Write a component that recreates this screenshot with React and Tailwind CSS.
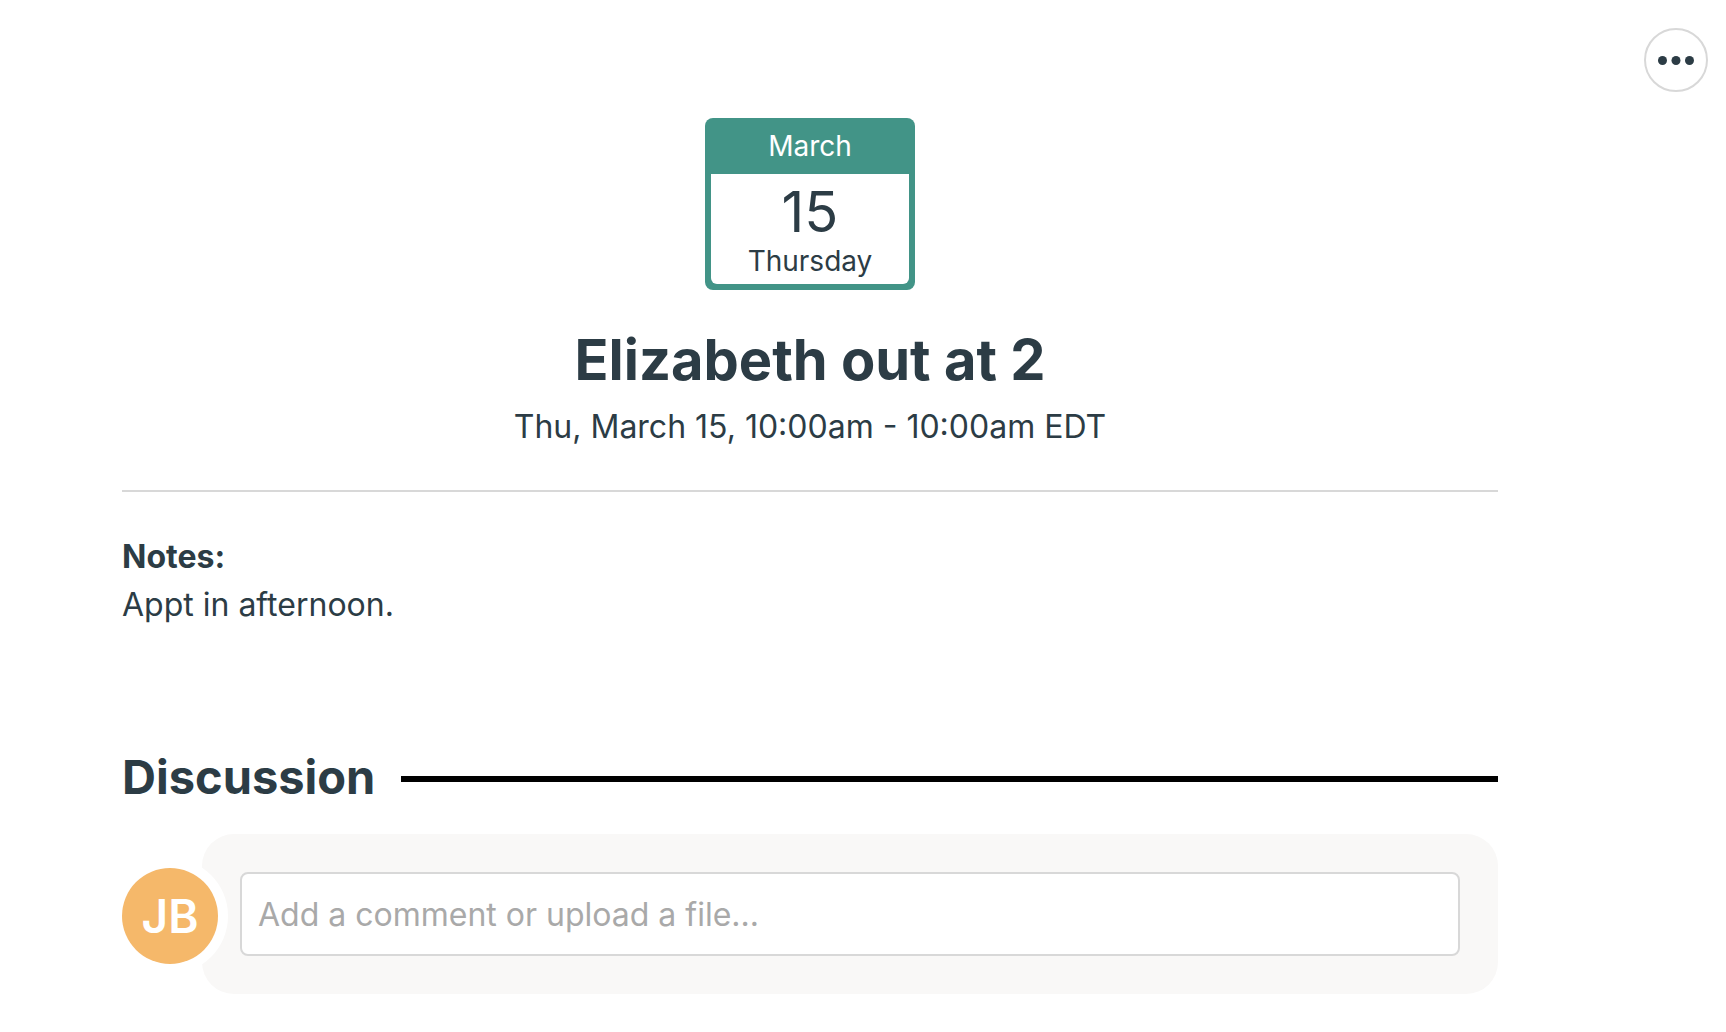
function MoreButton() {
  return (
    <button
      type="button"
      aria-label="More options"
      className="absolute top-7 right-[18px] flex size-16 items-center justify-center rounded-full border-2 border-[#d8d8d8] bg-white"
    >
      <svg width="36" height="9" viewBox="0 0 36 9" fill="#2c3c45" aria-hidden="true">
        <circle cx="4.5" cy="4.5" r="4.5" />
        <circle cx="18" cy="4.5" r="4.5" />
        <circle cx="31.5" cy="4.5" r="4.5" />
      </svg>
    </button>
  );
}

function CalendarBadge({ month, day, weekday }) {
  return (
    <div className="w-[210px] rounded-lg bg-[#429487] px-1.5 pb-1.5 text-center text-[28px]">
      <div className="h-14 leading-[56px] text-white">{month}</div>
      <div className="h-[110px] rounded-b-md bg-white pt-2">
        <div className="text-[56px] leading-[60px]">{day}</div>
        <div className="leading-[38px]">{weekday}</div>
      </div>
    </div>
  );
}

export default function App() {
  return (
    <div className="relative min-h-screen bg-white pt-[118px] pr-[228px] pb-9 pl-[122px] font-['Inter',sans-serif] text-[32px] leading-[48px] text-[#2c3c45]">
      <MoreButton />

      <main>
        <header className="flex flex-col items-center border-b-2 border-[#d8d8d8] pb-[39px]">
          <CalendarBadge month="March" day="15" weekday="Thursday" />
          <h1 className="mt-9 text-[56px] leading-[68px] font-bold">Elizabeth out at 2</h1>
          <p className="mt-[9px]">Thu, March 15, 10:00am - 10:00am EDT</p>
        </header>

        <section className="mt-[41px]">
          <h2 className="font-bold">Notes:</h2>
          <p>Appt in afternoon.</p>
        </section>

        <section className="mt-[120px]">
          <div className="flex items-center gap-[26px]">
            <h2 className="pb-1 text-[47px] leading-[56px] font-bold">Discussion</h2>
            <div className="h-1.5 flex-1 bg-black" />
          </div>

          <form className="mt-[25px] flex items-center">
            <div className="z-10 mt-1 flex size-24 shrink-0 items-center justify-center rounded-full bg-[#f5b86a] text-[46px] font-semibold text-white ring-10 ring-white">
              JB
            </div>
            <div className="-ml-4 flex-1 rounded-[32px] bg-[#f9f8f7] p-[38px]">
              <input
                type="text"
                aria-label="Comment"
                placeholder="Add a comment or upload a file..."
                className="block h-[84px] w-full rounded-lg border-2 border-[#d8d8d8] bg-white px-4 placeholder:text-[#a9a9a9]"
              />
            </div>
          </form>
        </section>
      </main>
    </div>
  );
}
